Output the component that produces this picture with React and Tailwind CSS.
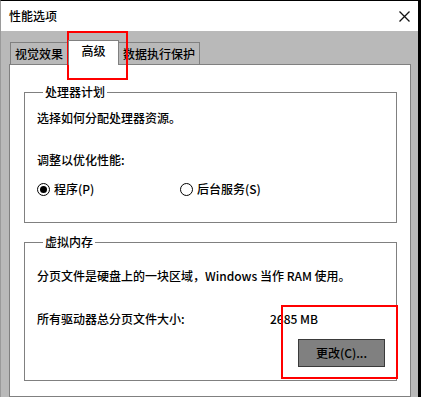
import React from "react";

const font = { fontFamily: '"Noto Sans CJK SC", "Noto Sans", sans-serif' };

function Radio({ checked, label }) {
  return (
    <div className="flex items-center gap-[4px]">
      <span className="flex h-[13px] w-[13px] items-center justify-center rounded-full border-[1.5px] border-black bg-white">
        {checked ? <span className="h-[7px] w-[7px] rounded-full bg-black" /> : null}
      </span>
      <span>{label}</span>
    </div>
  );
}

function Group({ title, className, children }) {
  return (
    <fieldset className={`mx-[13px] ml-[14px] border border-[#808080] pl-[12px] pr-[11px] ${className}`}>
      <legend className="ml-[6px] px-[2px] leading-[16px]">{title}</legend>
      {children}
    </fieldset>
  );
}

export default function App() {
  return (
    <div
      className="relative flex h-[397px] w-[421px] flex-col overflow-hidden border-t border-l border-r-[3px] border-t-black border-l-[#9a9a9a] border-r-black bg-[#b9b9b9] text-[12px] font-medium text-black"
      style={font}
    >
      {/* title bar */}
      <div className="flex h-[30px] shrink-0 items-center justify-between bg-white pl-[8px] pr-[7px]">
        <span className="leading-[16px]">性能选项</span>
        <svg width="11" height="11" viewBox="0 0 11 11" className="mr-[1px]">
          <path d="M0.5 0.5 L10.5 10.5 M10.5 0.5 L0.5 10.5" stroke="#111" strokeWidth="1.3" />
        </svg>
      </div>

      <div className="flex flex-1 flex-col pl-[8px] pr-[7px]">
        {/* tabs */}
        <div className="flex h-[33px] shrink-0 items-end pl-[1px]">
          <div className="flex h-[22px] w-[58px] items-center justify-center border border-b-0 border-[#808080] leading-[16px]">
            视觉效果
          </div>
          <div className="relative z-10 -mb-px flex h-[25px] w-[51px] items-start justify-center border border-b-0 border-[#808080] bg-white pt-[2px] leading-[16px]">
            高级
          </div>
          <div className="flex h-[22px] w-[81px] items-center justify-center border border-b-0 border-l-0 border-[#808080] leading-[16px]">
            数据执行保护
          </div>
        </div>

        {/* panel */}
        <div className="flex-1 border border-[#808080] bg-white">
          <Group title="处理器计划" className="mt-[19px] pb-[25px]">
            <div className="mt-[10px] leading-[16px]">选择如何分配处理器资源。</div>
            <div className="mt-[26px] leading-[16px]">调整以优化性能:</div>
            <div className="mt-[13px] flex h-[16px] items-center leading-[16px]">
              <div className="w-[143px]">
                <Radio checked label="程序(P)" />
              </div>
              <Radio label="后台服务(S)" />
            </div>
          </Group>

          <Group title="虚拟内存" className="mt-[11px] pb-[13px]">
            <div className="mt-[18px] leading-[16px]">分页文件是硬盘上的一块区域，Windows 当作 RAM 使用。</div>
            <div className="mt-[27px] flex leading-[16px]">
              <span className="w-[233px]">所有驱动器总分页文件大小:</span>
              <span>2685 MB</span>
            </div>
            <div className="mt-[12px] flex justify-end">
              <button className="h-[28px] w-[87px] border border-[#3a3a3a] bg-[#808080] leading-[16px]">
                更改(C)...
              </button>
            </div>
          </Group>
        </div>
      </div>

      {/* red annotation boxes */}
      <div className="pointer-events-none absolute left-[66px] top-[30px] h-[49px] w-[61px] border-2 border-[#ff0000]" />
      <div className="pointer-events-none absolute left-[280px] top-[304px] h-[74px] w-[117px] border-2 border-[#ff0000]" />
    </div>
  );
}
